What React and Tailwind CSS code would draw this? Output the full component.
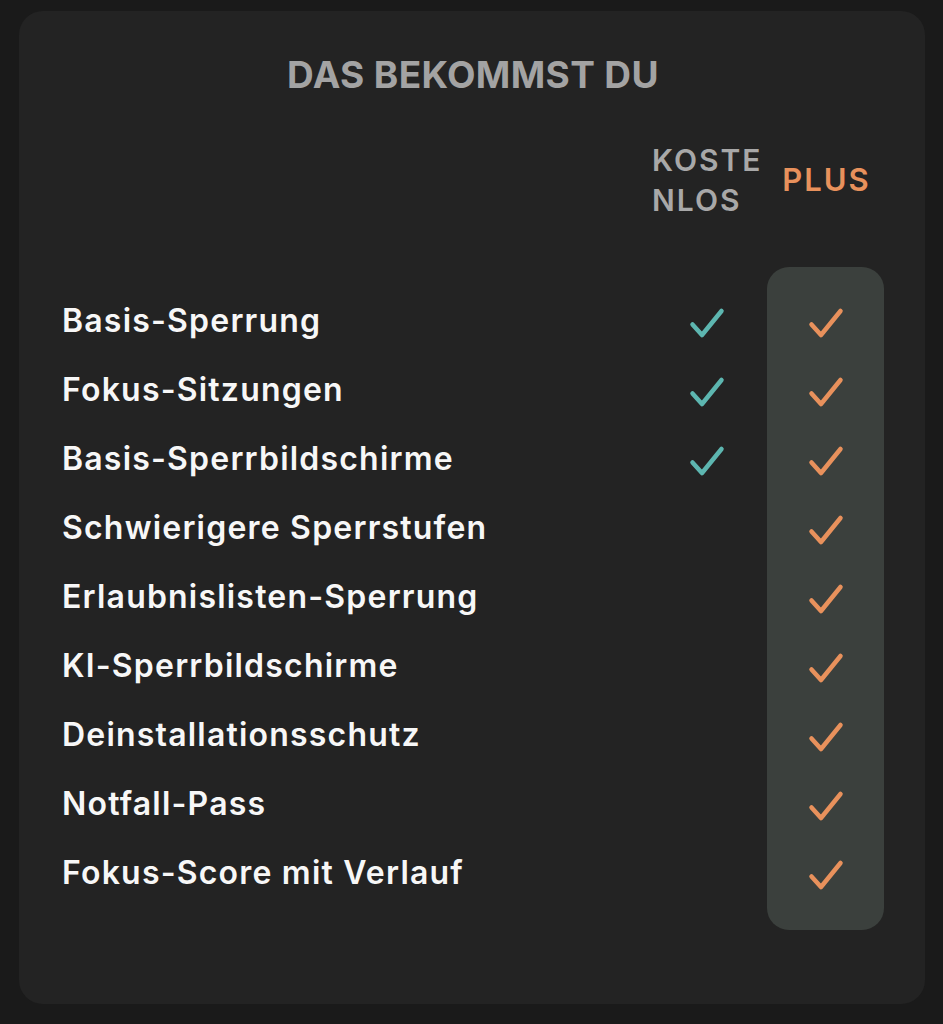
import React from "react";

const rows = [
  ["Basis-Sperrung", true],
  ["Fokus-Sitzungen", true],
  ["Basis-Sperrbildschirme", true],
  ["Schwierigere Sperrstufen", false],
  ["Erlaubnislisten-Sperrung", false],
  ["KI-Sperrbildschirme", false],
  ["Deinstallationsschutz", false],
  ["Notfall-Pass", false],
  ["Fokus-Score mit Verlauf", false],
];

function Check({ color }) {
  return (
    <svg width="36" height="32" viewBox="0 0 36 32" fill="none">
      <path
        d="M3.5 17.5 L13 28 L32.5 4"
        stroke={color}
        strokeWidth="4.5"
        strokeLinecap="round"
        strokeLinejoin="round"
      />
    </svg>
  );
}

export default function App() {
  return (
    <div
      className="min-h-[1024px] w-full bg-[#1a1a1a] pt-[11px] pl-[19px] pr-[18px] pb-[21px]"
      style={{ fontFamily: "Inter, 'Noto Sans', sans-serif" }}
    >
      <div className="rounded-[24px] bg-[#232323] pt-[42px] pb-[74px] pl-[43px] pr-[41px]">
        <div className="text-center text-[37px] leading-[44px] font-bold tracking-[0.01em] text-[#a3a3a3]">
          DAS BEKOMMST DU
        </div>
        <div className="mt-[43px] flex items-center">
          <div className="flex-1" />
          <div className="w-[122px] pl-[7px] break-all text-[30px] leading-[40px] font-semibold tracking-[2px] text-[#a8a8a8]">
            KOSTENLOS
          </div>
          <div className="w-[117px] pl-[2px] text-center text-[31px] leading-[40px] font-semibold tracking-[2px] text-[#e8915c]">
            PLUS
          </div>
        </div>
        <div className="mt-[47px] flex">
          <div className="flex flex-1 flex-col py-[21px]">
            {rows.map(([label]) => (
              <div
                key={label}
                className="flex h-[69px] items-center text-[32px] font-semibold tracking-[1.2px] text-[#f7f7f7]"
              >
                <span className="-mt-[4px]">{label}</span>
              </div>
            ))}
          </div>
          <div className="flex w-[122px] flex-col py-[21px]">
            {rows.map(([label, free]) => (
              <div key={label} className="flex h-[69px] items-center pl-[44px]">
                {free ? <Check color="#5db6b0" /> : null}
              </div>
            ))}
          </div>
          <div className="flex w-[117px] flex-col rounded-[22px] bg-[#3b403d] py-[21px]">
            {rows.map(([label]) => (
              <div key={label} className="flex h-[69px] items-center justify-center">
                <Check color="#e8915c" />
              </div>
            ))}
          </div>
        </div>
      </div>
    </div>
  );
}
